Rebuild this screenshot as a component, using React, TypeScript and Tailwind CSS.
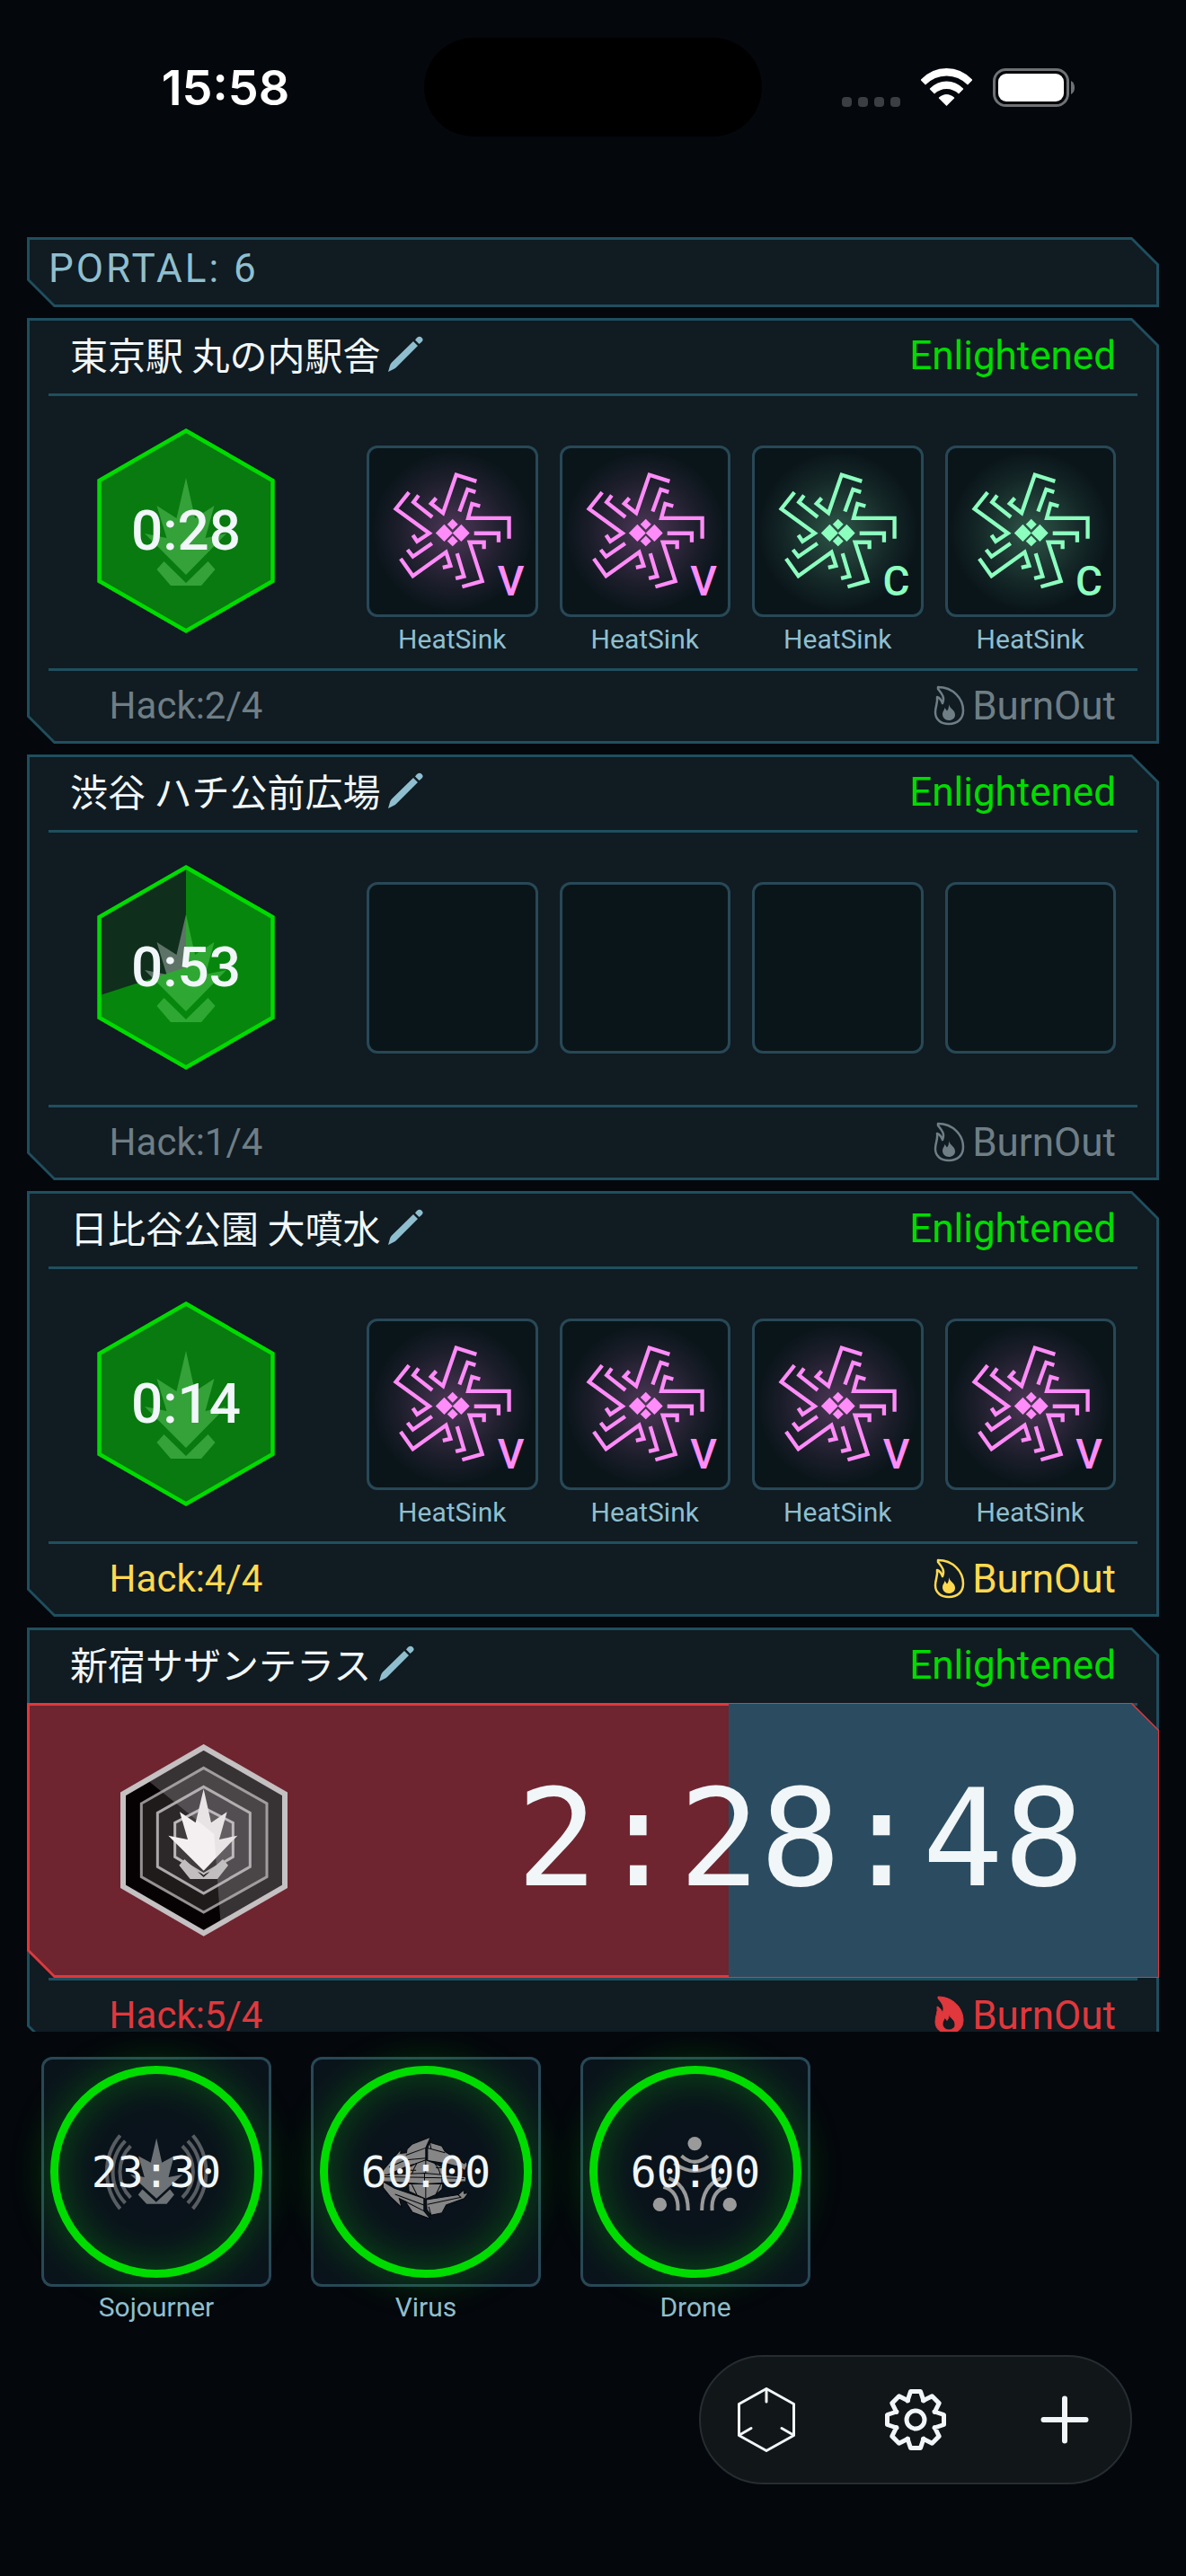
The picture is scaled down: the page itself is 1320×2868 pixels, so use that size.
import { useId } from "react";
import type { ReactNode } from "react";
import clsx from "clsx";

type ModRarity = "very-rare" | "common";
type Level = "idle" | "warning" | "burned";

interface Portal {
  name: string;
  faction: string;
  timer: string;
  progress: number;
  mods: (ModRarity | null)[];
  hacks: string;
  level: Level;
  burnedOut?: boolean;
}

const portals: Portal[] = [
  {
    name: "東京駅 丸の内駅舎",
    faction: "Enlightened",
    timer: "0:28",
    progress: 1,
    mods: ["very-rare", "very-rare", "common", "common"],
    hacks: "2/4",
    level: "idle",
  },
  {
    name: "渋谷 ハチ公前広場",
    faction: "Enlightened",
    timer: "0:53",
    progress: 0.7,
    mods: [null, null, null, null],
    hacks: "1/4",
    level: "idle",
  },
  {
    name: "日比谷公園 大噴水",
    faction: "Enlightened",
    timer: "0:14",
    progress: 1,
    mods: ["very-rare", "very-rare", "very-rare", "very-rare"],
    hacks: "4/4",
    level: "warning",
  },
  {
    name: "新宿サザンテラス",
    faction: "Enlightened",
    timer: "2:28:48",
    progress: 0.62,
    mods: [],
    hacks: "5/4",
    level: "burned",
    burnedOut: true,
  },
];

const levelColor: Record<Level, string> = {
  idle: "text-[#6f7e85]",
  warning: "text-[#ffd950]",
  burned: "text-[#e0383d]",
};

const CUT_OUTER =
  "[clip-path:polygon(0_0,calc(100%-30px)_0,100%_30px,100%_100%,30px_100%,0_calc(100%-30px))]";
const CUT_INNER =
  "[clip-path:polygon(0_0,calc(100%-28px)_0,100%_28px,100%_100%,28px_100%,0_calc(100%-28px))]";

const Panel = ({ children, className }: { children: ReactNode; className?: string }) => (
  <div className={clsx("relative shrink-0", className)}>
    <div className={clsx("absolute inset-0 bg-[#1f4f5e]", CUT_OUTER)} />
    <div className={clsx("absolute inset-[3px] bg-[#101b22]", CUT_INNER)} />
    <div className="relative">{children}</div>
  </div>
);

const StatusBar = () => (
  <header className="grid grid-cols-[1fr_376px_1fr] items-center h-[194px] shrink-0">
    <div className="text-center pl-[30px] font-['Inter',sans-serif] text-[54px] font-semibold text-white">
      15:58
    </div>
    <div className="h-[110px] rounded-full bg-black" />
    <div className="flex items-end justify-center gap-[23px] pr-[34px]">
      <div className="flex gap-[7px]">
        {[0, 1, 2, 3].map((i) => (
          <span key={i} className="w-[11px] h-[11px] rounded-[4px] bg-[#3b3e42]" />
        ))}
      </div>
      <svg className="w-[57px] h-[43px]" viewBox="0 0 57 43" fill="#fff">
        <path d="M0 12.5Q12 0 28.500 0T57 12.500Q57.500 13 57 13.500L52 18.500Q42 8.500 28.500 8.500T5 18.500L0 13.500Q-.5 13 0 12.500Z" />
        <path d="M10 22.500Q18 14.500 28.500 14.500T47 22.500Q47.500 23 47 23.500L42 28.500Q36 23 28.500 23T15 28.500L10 23.500Q9.500 23 10 22.500Z" />
        <path d="M20 32.500Q24 29 28.500 29T37 32.500Q37.500 33 37 33.500L28.500 42L20 33.500Q19.500 33 20 32.500Z" />
      </svg>
      <svg className="w-[92px] h-[43px]" viewBox="0 0 92 43">
        <rect x="1.5" y="1.500" width="82" height="40" rx="13" fill="none" stroke="#6f7174" strokeWidth="3" />
        <rect x="6" y="6" width="73" height="31" rx="9" fill="#fff" />
        <path d="M87 14Q91 16 91 21.500T87 29Z" fill="#6f7174" />
      </svg>
    </div>
  </header>
);

const PencilIcon = () => (
  <svg className="w-10 h-10" viewBox="0 0 40 40" fill="#8fbfce">
    <path d="M1 40L3 33Q3.500 31 5 29.500L29 6L34 11L10 35Q8.500 36.500 7 37Z" />
    <path d="M31 4.500L33 2Q36 -.5 38.500 2T38 7L35.500 9Z" />
  </svg>
);

const FLAME =
  "M5 2C22 2 33 15 33 28C33 38 26 43 17 43C8 43 2 38 2 30C2 23 5 20 4 13C7 14 9 17 10 20C13 13 9 9 5 4Z";
const FLAME_CORE =
  "M17 21C18 26 24 27 24 33C24 36.500 21 39 17 39C13 39 10 36 10 32C10 29 12 28 12.500 25L15 28.500C17 26 17 24 17 21Z";

const FlameIcon = ({ filled }: { filled?: boolean }) => (
  <svg className="w-[35px] h-[45px]" viewBox="0 0 35 45" fill="currentColor">
    {filled ? (
      <path d={`${FLAME}${FLAME_CORE}`} fillRule="evenodd" stroke="currentColor" strokeWidth="1" />
    ) : (
      <>
        <path d={FLAME} fill="none" stroke="currentColor" strokeWidth="2.500" strokeLinejoin="round" />
        <path d={FLAME_CORE} />
      </>
    )}
  </svg>
);

// Point on a circle around (100, 115), clockwise from twelve o'clock
const sectorPath = (progress: number) => {
  const angle = progress * Math.PI * 2;
  const x = 100 + 200 * Math.sin(angle);
  const y = 115 - 200 * Math.cos(angle);
  return `M100 115V-85A200 200 0 ${progress > 0.5 ? 1 : 0} 1 ${x} ${y}Z`;
};

const HEX = "M100 3.500L196.500 59V171L100 226.500L3.500 171V59Z";

const HexTimer = ({ timer, progress }: { timer: string; progress: number }) => {
  const clip = useId();
  return (
    <div className="relative w-[200px] h-[230px]">
      <svg className="w-full h-full" viewBox="0 0 200 230">
        <clipPath id={clip}>
          <path d={HEX} />
        </clipPath>
        <path d={HEX} fill="#0f2e1c" />
        <g fill="#fff" opacity=".33">
          <path d="M100 56L110 101L131.500 87L121.500 123L145 118L100 164L54 118L78.500 123L67.500 87L89.500 101Z" />
          <path d="M75.500 149L100 173L124.500 149L132.500 158L117 176H83L67.500 158Z" />
        </g>
        {progress >= 1 ? (
          <path d={HEX} fill="#00dc00" opacity=".44" />
        ) : (
          <path d={sectorPath(progress)} fill="#00dc00" opacity=".51" clipPath={`url(#${clip})`} />
        )}
        <path d={HEX} fill="none" stroke="#00dc00" strokeWidth="4.500" />
      </svg>
      <span className="absolute inset-0 flex items-center justify-center text-[62px] font-medium text-[#f1f6f9]">
        {timer}
      </span>
    </div>
  );
};

const HeatSinkIcon = () => (
  <svg className="absolute inset-0 w-full h-full" viewBox="33 57 555 555" fill="none" stroke="currentColor" strokeWidth="13">
    <path d="M392 168L324 146L280 274L240 243L257 224" />
    <path d="M389 204L362 195L335 269" />
    <path d="M404 251L377 243L364 291H501V360" />
    <path d="M384 342H466V372" />
    <path d="M417 395V372H369L411 502L344 521" />
    <path d="M327 409L350 486L322 493" />
    <path d="M279 457L305 451L290 405L179 485L138 427" />
    <path d="M243 376L179 420L161 397" />
    <path d="M179 348L193 369L234 342L122 260L166 205" />
    <path d="M244 288L181 238L198 215" />
    <path
      d="M255 341L284 312L312 341L284 370ZM312 341L341 312L369 341L341 370ZM294 312L312 294L330 312L312 330ZM294 368L312 350L330 368L312 386Z"
      fill="currentColor"
      stroke="none"
    />
  </svg>
);

const modStyle: Record<ModRarity, { letter: string; color: string; glow: string }> = {
  "very-rare": {
    letter: "V",
    color: "text-[#ff8cf8]",
    glow: "bg-[radial-gradient(circle,rgba(255,140,248,0.28),rgba(255,140,248,0.08)_45%,transparent_68%)]",
  },
  common: {
    letter: "C",
    color: "text-[#8cffbf]",
    glow: "bg-[radial-gradient(circle,rgba(140,255,191,0.28),rgba(140,255,191,0.08)_45%,transparent_68%)]",
  },
};

const ModSlot = ({ mod }: { mod: ModRarity | null }) => (
  <div className="flex flex-col">
    <div className="relative aspect-square rounded-xl border-[3px] border-[#284856] bg-[#0a151a] overflow-hidden">
      {mod && (
        <div className={clsx("absolute inset-0", modStyle[mod].color, modStyle[mod].glow)}>
          <HeatSinkIcon />
          <span className="absolute right-3 bottom-[14px] text-[46px] leading-[46px] font-medium">
            {modStyle[mod].letter}
          </span>
        </div>
      )}
    </div>
    {mod && <span className="mt-[6px] text-center text-[30px] leading-[38px] text-[#8fbfce]">HeatSink</span>}
  </div>
);

const CooldownBadge = () => {
  const clip = useId();
  return (
    <svg className="w-[186px] h-[214px]" viewBox="42 66 558 642" strokeWidth="9">
      <clipPath id={clip}>
        <path d="M137 190L355 366L376 657L700 640V0H137Z" />
      </clipPath>
      <path d="M320 76L591 232V541L320 697L51 541V232Z" fill="#060203" stroke="#c5c0c2" strokeWidth="18" />
      <path d="M320 145L531 264V509L320 627L112 509V264Z" fill="#201b1b" stroke="#959091" />
      <path d="M320 208L475 295V475L320 564L166 475V295Z" fill="#2c2729" stroke="#aca8aa" />
      <path d="M320 278L418 328V442L320 500L224 442V328Z" fill="#403c3e" stroke="#bbb7b9" />
      <path d="M238 470L256 450L320 508L384 450L402 470L366 516H275Z" fill="#c2bebf" />
      <path d="M300 492L320 500L340 492L320 510Z" fill="#2c2729" />
      <path d="M296 482L320 496L344 482L320 503Z" fill="#c2bebf" />
      <path
        d="M320 215L345 328L398 292L372 384L433 371L320 488L202 371L267 384L240 292L293 328Z"
        fill="#f4f0f2"
      />
      <path d="M320 86L582 237V536L320 687L60 536V237Z" fill="#c6c3c4" opacity=".26" clipPath={`url(#${clip})`} />
    </svg>
  );
};

const BurnoutBanner = ({ timer, progress }: { timer: string; progress: number }) => (
  <div className="relative -mt-[3px] h-[306px]">
    <div className={clsx("absolute inset-0 bg-[#e0383d]", CUT_OUTER)} />
    <div className={clsx("absolute inset-[3px] bg-[#6e252f]", CUT_INNER)} />
    <div className={clsx("absolute inset-px", CUT_OUTER)}>
      <div className="ml-auto h-full bg-[#2b4c60]" style={{ width: `${(1 - progress) * 100}%` }} />
    </div>
    <div className="relative h-full flex items-center justify-between pl-[104px] pr-[83px]">
      <CooldownBadge />
      <span className="pb-1 font-['DejaVu_Sans_Mono',monospace] text-[150px] leading-none text-[#f1f6f9]">{timer}</span>
    </div>
  </div>
);

const PortalCard = ({ portal }: { portal: Portal }) => (
  <Panel>
    <div className="flex items-center justify-between h-[84px] px-12">
      <div className="flex items-center gap-2 pb-1">
        <h2 className="font-['Noto_Sans_CJK_JP',sans-serif] text-[42px] leading-[60px] text-[#f1f6f9]">
          {portal.name}
        </h2>
        <button type="button" aria-label={`Edit ${portal.name}`}>
          <PencilIcon />
        </button>
      </div>
      <span className="text-[44px] text-[#00dc00]">{portal.faction}</span>
    </div>
    <div className="mx-6 h-[3px] bg-[#1f4f5e]" />
    {portal.burnedOut ? (
      <BurnoutBanner timer={portal.timer} progress={portal.progress} />
    ) : (
      <div className="flex items-center h-[303px] px-12">
        <div className="w-[282px] pr-6 pb-1 flex justify-center">
          <HexTimer timer={portal.timer} progress={portal.progress} />
        </div>
        <div className="flex-1 self-start pt-[55px] ml-12 grid grid-cols-4 gap-6">
          {portal.mods.map((mod, i) => (
            <ModSlot key={i} mod={mod} />
          ))}
        </div>
      </div>
    )}
    <div className="mx-6 h-[3px] bg-[#1f4f5e]" />
    <div className={clsx("flex items-center justify-between h-[81px] pl-6 pr-12 pb-1 leading-[48px]", levelColor[portal.level])}>
      <span className="w-[306px] text-center text-[42px]">Hack:{portal.hacks}</span>
      <span className="flex items-center gap-2 text-[44px]">
        <FlameIcon filled={portal.burnedOut} />
        BurnOut
      </span>
    </div>
  </Panel>
);

const SojournerIcon = () => (
  <svg className="w-full h-full" viewBox="80 91 765 766" fill="#6d7277">
    <path d="M463 362L481 443L521 422L503 492L550 483L463 563L376 483L423 492L403 422L444 443Z" />
    <path d="M416 532L462 575L508 532L522 550L497 581H430L402 550Z" />
    <g fill="none" stroke="#585d61" strokeWidth="12">
      <path d="M342 353A190 190 0 0 0 342 597" />
      <path d="M584 353A190 190 0 0 1 584 597" />
      <path d="M359 371A150 150 0 0 0 359 578" />
      <path d="M567 371A150 150 0 0 1 567 578" />
      <path d="M377 388A121 121 0 0 0 377 560" />
      <path d="M549 388A121 121 0 0 1 549 560" />
    </g>
  </svg>
);

const VirusIcon = () => (
  <svg className="w-full h-full" viewBox="-160 -209 765 765" fill="#868686" stroke="#05080c" strokeWidth="3">
    <path d="M160 98L176 82L238 58L222 94V140L168 152L80 190V168L140 98L138 112L158 110Z" />
    <path d="M228 94L236 76L276 88L286 106L350 146L358 138L360 152L352 170L336 158L290 146L228 136Z" />
    <path d="M156 118L222 94M228 94L286 110M100 158L156 134L222 128M236 76L240 98" fill="none" />
    <path d="M162 160L190 146L222 134L254 146L280 160L284 180L276 232L254 250L222 264L192 250L166 238Z" />
    <path d="M222 134V262M192 146Q180 166 176 182M252 146Q268 166 270 182M166 214L280 214M176 216L192 248M272 216L256 248M160 168H190M256 160H280" fill="none" />
    <path d="M80 184L218 178L356 190V206L218 214L80 206Z" />
    <path d="M80 190L218 192L350 196M218 178V214M160 181V212M276 183V211" fill="none" />
    <path d="M80 206L118 228L216 262V304L238 330L178 308L154 272L134 262L142 292L104 256L80 226Z" />
    <path d="M224 266L330 250L348 234L350 246L364 244L350 262L290 284L276 310L240 318L226 300Z" />
    <path d="M120 248L216 284M154 272L216 304M228 282L340 258M240 318L232 290M330 250L340 260" fill="none" />
  </svg>
);

const DroneIcon = () => (
  <svg className="w-full h-full" viewBox="560 91 765 766" fill="#9a9a9a">
    <circle cx="940" cy="380" r="23" />
    <circle cx="824" cy="583" r="23" />
    <circle cx="1057" cy="583" r="23" />
    <g fill="none" stroke="#9a9a9a" strokeWidth="12">
      <path d="M896 421Q940 461 984 421" />
      <path d="M872 445Q940 497 1008 445" />
      <path d="M884 603Q888 538 836 524" />
      <path d="M918 603Q918 520 854 495" />
      <path d="M998 603Q994 538 1046 524" />
      <path d="M964 603Q964 520 1028 495" />
    </g>
  </svg>
);

const charms = [
  { label: "Sojourner", time: "23:30", Icon: SojournerIcon },
  { label: "Virus", time: "60:00", Icon: VirusIcon },
  { label: "Drone", time: "60:00", Icon: DroneIcon },
];

const HexMenuIcon = () => (
  <svg className="w-[72px] h-[76px]" viewBox="-36 -38 72 76" fill="none" stroke="#f1f6f9" strokeWidth="3" strokeLinejoin="round" strokeLinecap="round">
    <path d="M0 -34.500L30.500 -17.500V17.500L0 34.500L-30.500 17.500V-17.500Z" />
    <path d="M0 -34V-20M-30 17L-17 9.500M30 17L17 9.500" />
  </svg>
);

const GearIcon = () => {
  const tooth = [[-9, -21], [-5.5, -31.5], [5.5, -31.5], [9, -21]];
  const points = Array.from({ length: 8 }, (_, i) => {
    const a = (i * Math.PI) / 4;
    return tooth.map(([x, y]) => `${x * Math.cos(a) - y * Math.sin(a)},${x * Math.sin(a) + y * Math.cos(a)}`);
  }).flat();
  return (
    <svg className="w-[76px] h-[76px]" viewBox="-38 -38 76 76" fill="none" stroke="#f1f6f9" strokeWidth="5" strokeLinejoin="round">
      <polygon points={points.join(" ")} />
      <circle r="10" />
    </svg>
  );
};

const PlusIcon = () => (
  <svg className="w-[60px] h-[60px]" viewBox="-30 -30 60 60" stroke="#f1f6f9" strokeWidth="6" strokeLinecap="round">
    <path d="M0 -23.500V23.500M-23.500 0H23.500" />
  </svg>
);

const Footer = () => (
  <footer className="shrink-0 overflow-hidden pt-7 pb-[102px]">
    <div className="flex gap-[44px] px-[46px]">
      {charms.map(({ label, time, Icon }) => (
        <div key={label} className="w-64 flex flex-col">
          <div className="relative aspect-square rounded-xl border-[3px] border-[#284856] bg-[#0a131b]">
            <div className="absolute inset-[7px] rounded-full border-[9px] border-[#00dc00] shadow-[0_0_45px_rgba(0,220,0,0.3),inset_0_0_45px_rgba(0,220,0,0.3)]" />
            <div className="absolute -inset-[3px]">
              <Icon />
            </div>
            <span className="absolute inset-0 flex items-center justify-center font-['DejaVu_Sans_Mono',monospace] text-[48px] text-[#f1f6f9]">
              {time}
            </span>
          </div>
          <span className="relative mt-1 text-center text-[30px] leading-[38px] text-[#8fbfce]">{label}</span>
        </div>
      ))}
    </div>
    <nav className="mt-[34px] ml-auto mr-[60px] w-[482px] h-36 grid grid-cols-[146px_146px_146px] justify-between rounded-full border-2 border-[#262d32] bg-[#111618]">
      <button type="button" aria-label="Portals" className="flex items-center justify-center">
        <HexMenuIcon />
      </button>
      <button type="button" aria-label="Settings" className="flex items-center justify-center">
        <GearIcon />
      </button>
      <button type="button" aria-label="Add" className="flex items-center justify-center">
        <PlusIcon />
      </button>
    </nav>
  </footer>
);

const App = () => {
  return (
    <div className="flex flex-col h-screen bg-[#04070c] font-['Roboto',sans-serif]">
      <StatusBar />
      <main className="flex flex-col flex-1 min-h-0 overflow-hidden gap-3 px-[30px] pt-[70px]">
        <Panel>
          <h1 className="h-[78px] px-6 pt-2 text-[44px] leading-[54px] tracking-[3px] text-[#8fbfce]">PORTAL: 6</h1>
        </Panel>
        {portals.map((portal) => (
          <PortalCard key={portal.name} portal={portal} />
        ))}
      </main>
      <Footer />
    </div>
  );
};

export default App;
